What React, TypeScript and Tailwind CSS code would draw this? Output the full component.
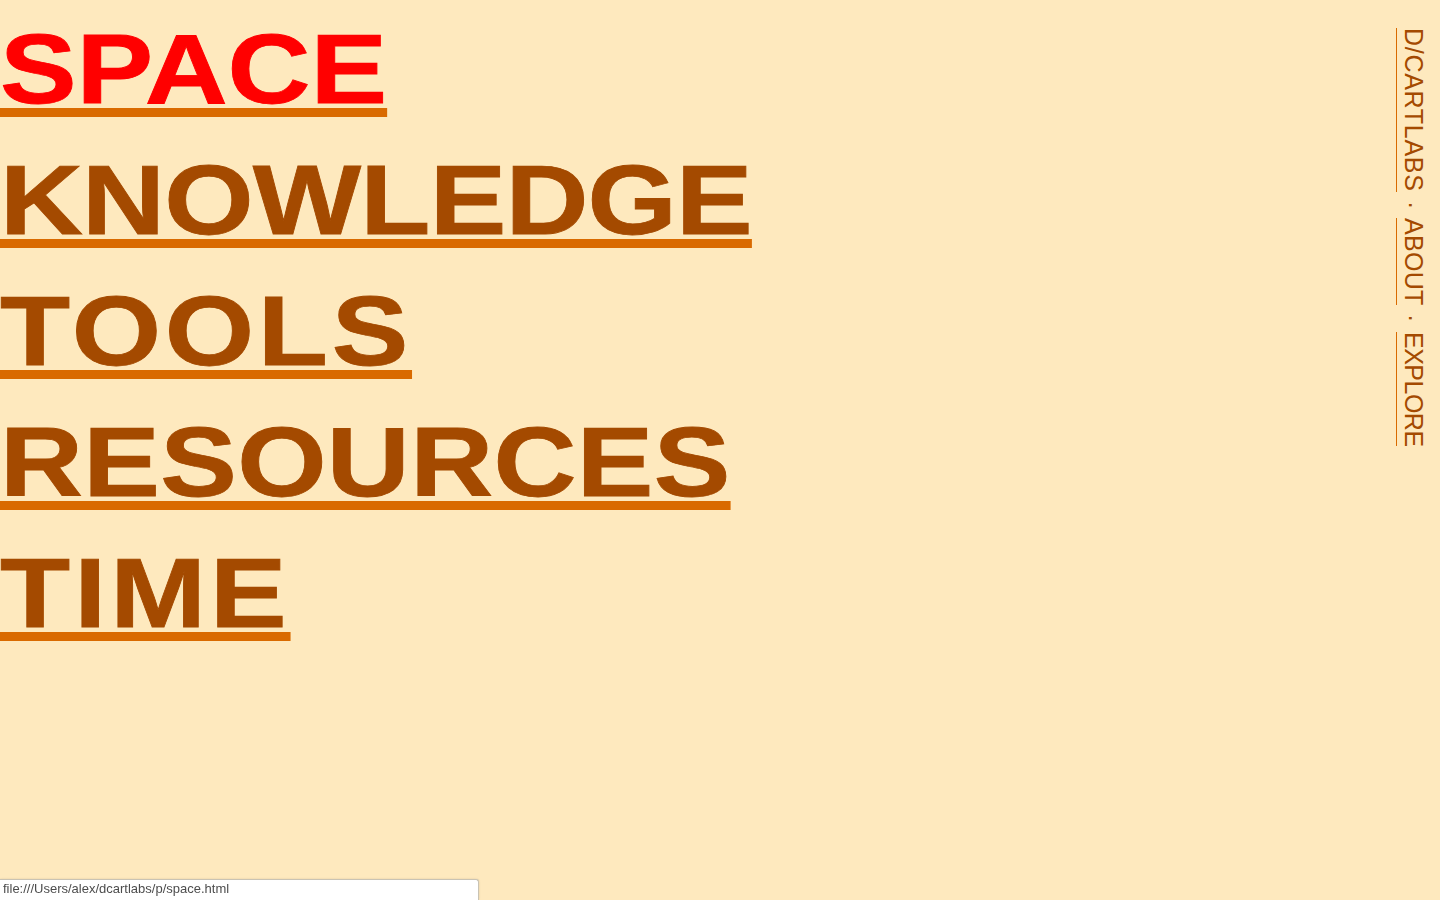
// tracking per word keeps the stretched glyphs at the widths of the original
const topics = [
  { label: "SPACE", active: true, track: "tracking-[0px]" },
  { label: "KNOWLEDGE", active: false, track: "tracking-[-0.7px]" },
  { label: "TOOLS", active: false, track: "tracking-[3.2px]" },
  { label: "RESOURCES", active: false, track: "tracking-[0.3px]" },
  { label: "TIME", active: false, track: "tracking-[3.5px]" },
];

export default function App() {
  return (
    <div className="min-h-[900px] bg-[#fee9be] flex justify-between font-['Liberation_Sans',Arial,sans-serif]">
      <nav className="pt-[3px] flex flex-col items-start">
        {topics.map((t) => (
          <a
            key={t.label}
            href="#"
            className={`block origin-left scale-x-[1.16] text-[99px] leading-[131px] font-bold [-webkit-text-stroke:0.8px_currentColor] underline decoration-[#d96a00] decoration-[9px] underline-offset-[5px] ${t.track} ${
              t.active ? "text-[#ff0000]" : "text-[#a44a00]"
            }`}
          >
            {t.label}
          </a>
        ))}
      </nav>

      <div className="pt-[28px] pr-[12px]">
        <div className="[writing-mode:vertical-rl] text-[25px] leading-[28px] text-[#a44a00] flex items-center gap-[9px]">
          <a href="#" className="border-l border-[#d96a00] pl-[3px] tracking-[0.7px]">D/CARTLABS</a>
          <span>·</span>
          <a href="#" className="border-l border-[#d96a00] pl-[3px] tracking-[0.3px]">ABOUT</a>
          <span>·</span>
          <a href="#" className="border-l border-[#d96a00] pl-[3px] tracking-[-0.5px]">EXPLORE</a>
        </div>
      </div>

      <div className="fixed bottom-0 left-0 w-[479px] h-[21px] bg-white border-t border-r border-[#c9c3b4] rounded-tr-[3px] pl-[3px] text-[13px] leading-[18px] text-[#4d4d4d] shadow-[0_0_2px_rgba(0,0,0,0.15)]">
        file:///Users/alex/dcartlabs/p/space.html
      </div>
    </div>
  );
}
